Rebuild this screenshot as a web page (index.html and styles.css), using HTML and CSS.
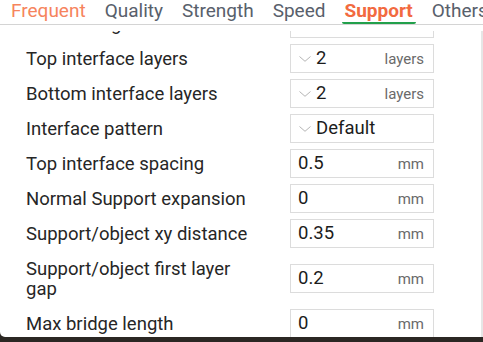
FILE: index.html
```html
<!DOCTYPE html>
<html lang="en">
<head>
    <meta charset="UTF-8">
    <meta name="viewport" content="width=device-width, initial-scale=1.0">
    <title>Process - Support</title>
    <link rel="stylesheet" href="styles.css">
</head>
<body>
    <div class="panel">
        <div class="tabs">
            <span class="tab frequent">Frequent</span>
            <span class="tab">Quality</span>
            <span class="tab">Strength</span>
            <span class="tab">Speed</span>
            <span class="tab active">Support</span>
            <span class="tab">Others</span>
        </div>

        <div class="viewport">
            <div class="options">
                <div class="option-row">
                    <div class="option-label">Pattern angle</div>
                    <div class="field"><span class="value">0</span><span class="unit">°</span></div>
                </div>
                <div class="option-row">
                    <div class="option-label">Top interface layers</div>
                    <div class="field">
                        <svg class="chevron" width="12" height="6" viewBox="0 0 12 6"><polyline points="0.5,0.5 6,5.3 11.5,0.5" fill="none" stroke="#b4b4b4" stroke-width="1"/></svg>
                        <span class="value combo">2</span><span class="unit">layers</span>
                    </div>
                </div>
                <div class="option-row">
                    <div class="option-label">Bottom interface layers</div>
                    <div class="field">
                        <svg class="chevron" width="12" height="6" viewBox="0 0 12 6"><polyline points="0.5,0.5 6,5.3 11.5,0.5" fill="none" stroke="#b4b4b4" stroke-width="1"/></svg>
                        <span class="value combo">2</span><span class="unit">layers</span>
                    </div>
                </div>
                <div class="option-row">
                    <div class="option-label">Interface pattern</div>
                    <div class="field">
                        <svg class="chevron" width="12" height="6" viewBox="0 0 12 6"><polyline points="0.5,0.5 6,5.3 11.5,0.5" fill="none" stroke="#b4b4b4" stroke-width="1"/></svg>
                        <span class="value combo">Default</span>
                    </div>
                </div>
                <div class="option-row">
                    <div class="option-label">Top interface spacing</div>
                    <div class="field"><span class="value">0.5</span><span class="unit">mm</span></div>
                </div>
                <div class="option-row">
                    <div class="option-label">Normal Support expansion</div>
                    <div class="field"><span class="value">0</span><span class="unit">mm</span></div>
                </div>
                <div class="option-row">
                    <div class="option-label">Support/object xy distance</div>
                    <div class="field"><span class="value">0.35</span><span class="unit">mm</span></div>
                </div>
                <div class="option-row">
                    <div class="option-label">Support/object first layer<br>gap</div>
                    <div class="field"><span class="value">0.2</span><span class="unit">mm</span></div>
                </div>
                <div class="option-row">
                    <div class="option-label">Max bridge length</div>
                    <div class="field"><span class="value">0</span><span class="unit">mm</span></div>
                </div>
            </div>
            <div class="scrollbar"></div>
        </div>
    </div>
</body>
</html>
```

FILE: styles.css
```css
body {
    margin: 0;
    padding: 0;
    background: #2b2723;
    font-family: "Roboto", "Noto Sans", sans-serif;
    color: #262626;
}

.panel {
    height: 337px;
    background: #FFFFFF;
    border-bottom-left-radius: 5px;
    overflow: hidden;
    display: flex;
    flex-direction: column;
}

.tabs {
    height: 24px;
    border-bottom: 1px solid #d4d4d4;
    margin-bottom: 6px;
    padding-left: 8px;
    display: flex;
    gap: 13px;
    white-space: nowrap;
    overflow: hidden;
    flex-shrink: 0;
}

.tab {
    font-size: 19px;
    line-height: 22px;
    padding: 0 3px;
    color: #58606b;
}

.tab.frequent {
    color: #f6845d;
}

.tab.active {
    color: #f26a40;
    font-weight: bold;
    border-bottom: 2px solid #22a04b;
    border-radius: 0 0 2px 2px;
}

.viewport {
    flex: 1;
    display: flex;
    overflow: hidden;
}

.options {
    flex: 1;
    margin-top: -25px;
}

.scrollbar {
    width: 2px;
    background: #e6e6e6;
}

.option-row {
    display: flex;
    align-items: center;
    min-height: 35px;
}

.option-label {
    width: 290px;
    box-sizing: border-box;
    padding: 7.5px 0 7.5px 26px;
    font-size: 18.5px;
    line-height: 20px;
    color: #262626;
}

.field {
    width: 144px;
    height: 29px;
    box-sizing: border-box;
    border: 1px solid #dcdcdc;
    padding: 0 9px 0 7px;
    display: flex;
    align-items: baseline;
}

.chevron {
    align-self: center;
    margin-left: 1px;
    flex-shrink: 0;
}

.value {
    flex: 1;
    font-size: 18.5px;
    line-height: 27px;
    color: #1c1c1c;
}

.value.combo {
    margin-left: 5px;
}

.unit {
    font-size: 15px;
    line-height: 27px;
    color: #6a6a6a;
}
```
